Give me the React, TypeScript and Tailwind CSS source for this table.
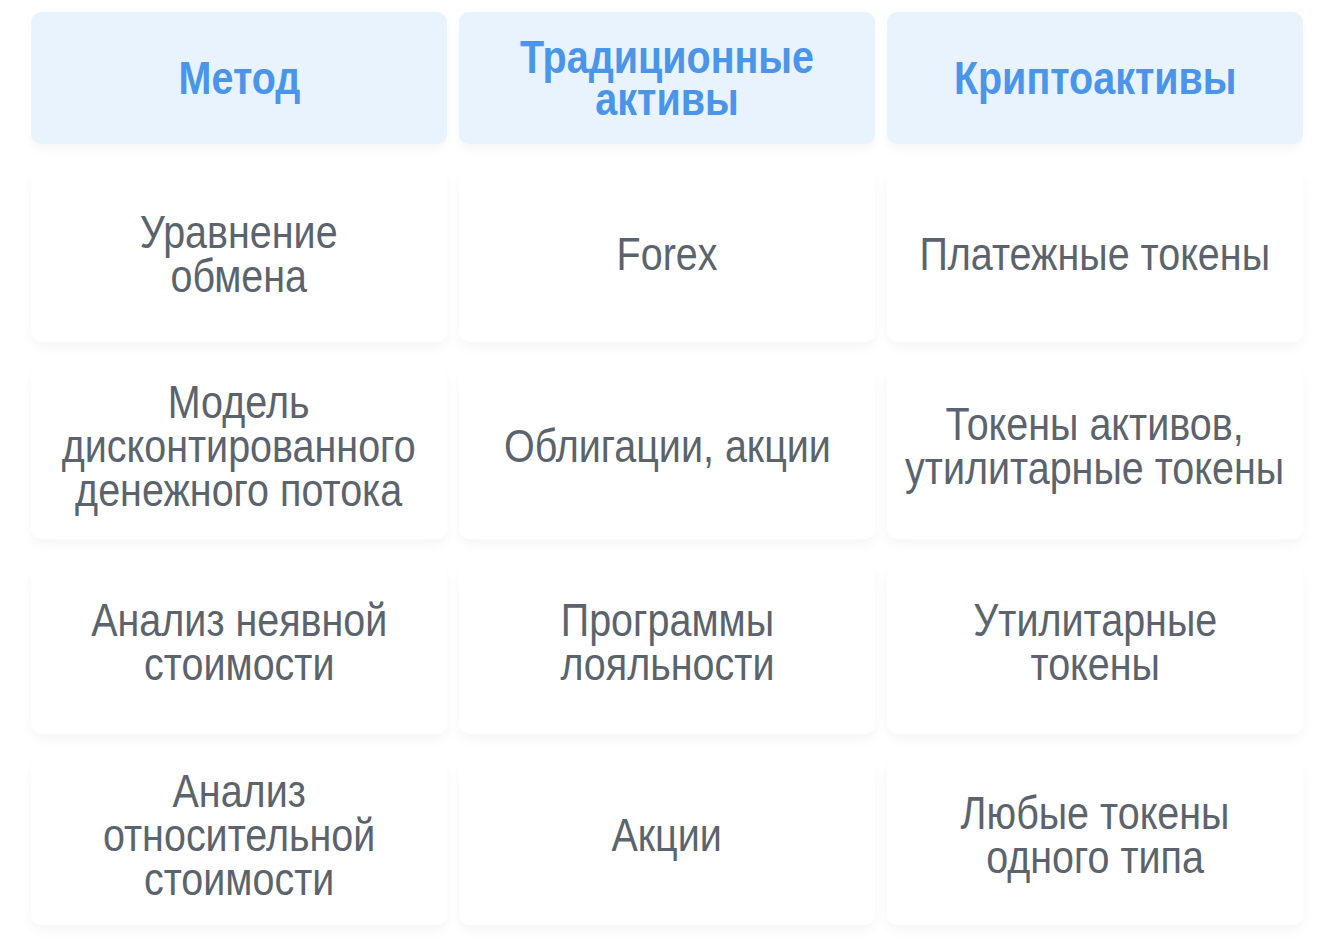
import React from "react";

const headers: string[][] = [["Метод"], ["Традиционные", "активы"], ["Криптоактивы"]];
const rows: string[][][] = [
  [["Уравнение", "обмена"], ["Forex"], ["Платежные токены"]],
  [["Модель", "дисконтированного", "денежного потока"], ["Облигации, акции"], ["Токены активов,", "утилитарные токены"]],
  [["Анализ неявной", "стоимости"], ["Программы", "лояльности"], ["Утилитарные", "токены"]],
  [["Анализ", "относительной", "стоимости"], ["Акции"], ["Любые токены", "одного типа"]],
];

const font = { fontFamily: '"Liberation Sans", Arial, sans-serif' };

function Lines({ lines }: { lines: string[] }) {
  return (
    <span className="inline-block origin-center scale-x-[0.84] whitespace-nowrap">
      {lines.map((l, i) => (
        <React.Fragment key={i}>
          {i > 0 && <br />}
          {l}
        </React.Fragment>
      ))}
    </span>
  );
}

export default function App() {
  return (
    <div className="min-h-[951px] w-[1334px] bg-white px-[31px] pt-[12px]" style={font}>
      <div className="grid grid-cols-3 grid-rows-[132px_173px_172px_170px_166px] gap-x-[12px] gap-y-[25px]">
        {headers.map((h, i) => (
          <div
            key={i}
            className="flex items-center justify-center rounded-[10px] bg-[#e8f3fd] text-center text-[47px] font-bold leading-[42px] text-[#4a95e9] shadow-[0_6px_10px_rgba(0,0,0,0.035)]"
          >
            <Lines lines={h} />
          </div>
        ))}
        {rows.map((r, ri) =>
          r.map((c, ci) => (
            <div
              key={`${ri}-${ci}`}
              className={`flex items-center justify-center rounded-[10px] bg-white text-center text-[47px] leading-[44px] text-[#5b636c] shadow-[0_6px_12px_rgba(0,0,0,0.04)] ${ri === 0 ? "pb-[4px]" : "pb-[14px]"}`}
            >
              <Lines lines={c} />
            </div>
          ))
        )}
      </div>
    </div>
  );
}
